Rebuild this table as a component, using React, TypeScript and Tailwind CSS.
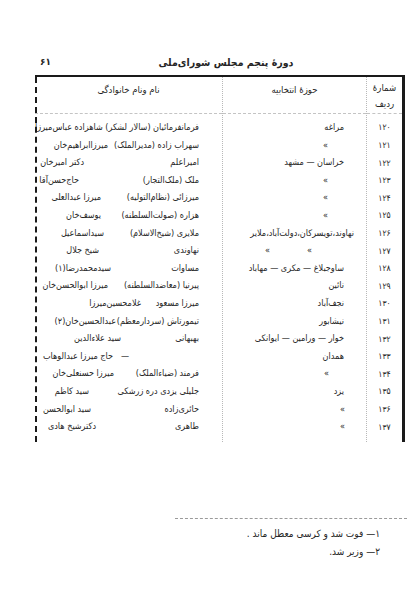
import React from "react";

type Row = {
  n: string;
  d: string;
  dc: string;
  d2?: string;
  d2c?: string;
  f: string;
  fc: string;
  g?: string;
  gc?: string;
};

const rows: Row[] = [
  { n: "۱۲۰", d: "مراغه", dc: "pr-[22px]", f: "فرمانفرمائیان (سالار لشکر) شاهزاده عباس‌میرزا", fc: "pr-[23px]" },
  { n: "۱۲۱", d: "»", dc: "pr-[38px]", f: "سهراب زاده (مدیرالملک)", fc: "pr-[23px]", g: "میرزاابراهیم‌خان", gc: "pr-[114px]" },
  { n: "۱۲۲", d: "خراسان — مشهد", dc: "pr-[22px]", f: "امیراعلم", fc: "pr-[23px]", g: "دکتر امیرخان", gc: "pr-[138px]" },
  { n: "۱۲۳", d: "»", dc: "pr-[38px]", f: "ملک (ملک‌التجار)", fc: "pr-[23px]", g: "حاج‌حسن‌آقا", gc: "pr-[143px]" },
  { n: "۱۲۴", d: "»", dc: "pr-[38px]", f: "میرزائی (نظام‌التولیه)", fc: "pr-[23px]", g: "میرزا عبدالعلی", gc: "pr-[121px]" },
  { n: "۱۲۵", d: "»", dc: "pr-[38px]", f: "هزاره (صولت‌السلطنه)", fc: "pr-[23px]", g: "یوسف‌خان", gc: "pr-[121px]" },
  { n: "۱۲۶", d: "نهاوند،تویسرکان،دولت‌آباد،ملایر", dc: "pr-[12px]", f: "ملایری (شیخ‌الاسلام)", fc: "pr-[23px]", g: "سیداسماعیل", gc: "pr-[118px]" },
  { n: "۱۲۷", d: "»", dc: "pr-[54px]", d2: "»", d2c: "pr-[96px]", f: "نهاوندی", fc: "pr-[23px]", g: "شیخ  جلال", gc: "pr-[123px]" },
  { n: "۱۲۸", d: "ساوجبلاغ — مکری — مهاباد", dc: "pr-[22px]", f: "مساوات", fc: "pr-[23px]", g: "سیدمحمدرضا(۱)", gc: "pr-[111px]" },
  { n: "۱۲۹", d: "نائین", dc: "pr-[22px]", f: "پیرنیا (معاضدالسلطنه)", fc: "pr-[23px]", g: "میرزا ابوالحسن‌خان", gc: "pr-[114px]" },
  { n: "۱۳۰", d: "نجف‌آباد", dc: "pr-[22px]", f: "میرزا مسعود", fc: "pr-[23px]", g: "غلامحسین‌میرزا", gc: "pr-[81px]" },
  { n: "۱۳۱", d: "نیشابور", dc: "pr-[22px]", f: "تیمورتاش (سردارمعظم)", fc: "pr-[23px]", g: "عبدالحسین‌خان(۲)", gc: "pr-[106px]" },
  { n: "۱۳۲", d: "خوار — ورامین — ایوانکی", dc: "pr-[22px]", f: "بهبهانی", fc: "pr-[23px]", g: "سید  علاءالدین", gc: "pr-[101px]" },
  { n: "۱۳۳", d: "همدان", dc: "pr-[22px]", f: "—", fc: "pr-[93px]", g: "حاج میرزا عبدالوهاب", gc: "pr-[109px]" },
  { n: "۱۳۴", d: "»", dc: "pr-[37px]", f: "فرمند (ضیاءالملک)", fc: "pr-[23px]", g: "میرزا حسنعلی‌خان", gc: "pr-[108px]" },
  { n: "۱۳۵", d: "یزد", dc: "pr-[22px]", f: "جلیلی یزدی دره زرشکی", fc: "pr-[23px]", g: "سید  کاظم", gc: "pr-[133px]" },
  { n: "۱۳۶", d: "»", dc: "pr-[21px]", f: "حائری‌زاده", fc: "pr-[23px]", g: "سید ابوالحسن", gc: "pr-[131px]" },
  { n: "۱۳۷", d: "»", dc: "pr-[21px]", f: "طاهری", fc: "pr-[23px]", g: "دکترشیخ هادی", gc: "pr-[126px]" },
];

export default function App() {
  return (
    <div
      className="w-[418px] h-[600px] bg-white text-[#262626] overflow-hidden"
      style={{ fontFamily: '"DejaVu Sans Condensed", "DejaVu Sans", sans-serif' }}
    >
      {/* running head */}
      <div className="flex items-center h-[16px] mt-[54px]">
        <span className="ml-[40px] w-[14px] text-[10px] font-bold leading-none">۶۱</span>
        <div dir="rtl" className="ml-[66px] w-[212px] text-center text-[10.5px] font-semibold leading-none">
          دورهٔ پنجم مجلس شورای‌ملی
        </div>
      </div>

      {/* table */}
      <div className="ml-[35px] mt-[5px] w-[370px] border-t-2 border-r-[3px] border-[#1a1a1a]">
        <div dir="rtl" className="flex border-l-2 border-dashed border-[#1a1a1a] text-[9.5px]">
          {/* number column */}
          <div className="w-[36px] shrink-0 border-l border-dotted border-[#b8b8b8]">
            <div className="h-[37px] border-b border-dashed border-[#c4c4c4] flex flex-col items-center pt-[5px] gap-[5px] leading-[11px]">
              <span>شمارهٔ</span>
              <span>ردیف</span>
            </div>
            <div className="pt-[5px] pb-[6px]">
              {rows.map((r) => (
                <div key={r.n} className="h-[17.6px] flex items-center justify-center text-[8.5px] tracking-[1px]">
                  {r.n}
                </div>
              ))}
            </div>
          </div>

          {/* district column */}
          <div className="w-[144px] shrink-0 border-l border-dotted border-[#b8b8b8]">
            <div className="h-[37px] border-b border-dashed border-[#c4c4c4] text-center pt-[7px] leading-[11px]">
              حوزهٔ انتخابیه
            </div>
            <div className="pt-[5px] pb-[6px] text-[9px]">
              {rows.map((r) => (
                <div key={r.n} className="h-[17.6px] grid items-center whitespace-nowrap">
                  <span className={`col-start-1 row-start-1 ${r.dc}`}>{r.d}</span>
                  {r.d2 && <span className={`col-start-1 row-start-1 ${r.d2c}`}>{r.d2}</span>}
                </div>
              ))}
            </div>
          </div>

          {/* name column */}
          <div className="flex-1">
            <div className="h-[37px] border-b border-dashed border-[#c4c4c4] text-center pt-[7px] leading-[11px]">
              نام ونام خانوادگی
            </div>
            <div className="pt-[5px] pb-[6px] text-[9px]">
              {rows.map((r) => (
                <div key={r.n} className="h-[17.6px] grid items-center whitespace-nowrap">
                  <span className={`col-start-1 row-start-1 ${r.fc}`}>{r.f}</span>
                  {r.g && <span className={`col-start-1 row-start-1 ${r.gc}`}>{r.g}</span>}
                </div>
              ))}
            </div>
          </div>
        </div>
      </div>

      {/* footnotes */}
      <div className="ml-[175px] mt-[76px] w-[232px] border-t border-dashed border-[#9a9a9a]" />
      <div dir="rtl" className="mr-[38px] mt-[6px] text-[10px] leading-[18px] flex flex-col">
        <span>۱— فوت شد و کرسی معطل ماند .</span>
        <span>۲— وزیر شد.</span>
      </div>
    </div>
  );
}
